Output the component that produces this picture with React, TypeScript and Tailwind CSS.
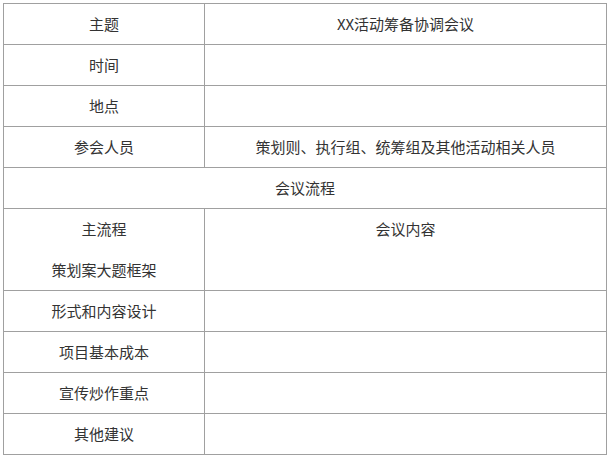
const rows: [string, string][] = [
  ["主题", "XX活动筹备协调会议"],
  ["时间", ""],
  ["地点", ""],
  ["参会人员", "策划则、执行组、统筹组及其他活动相关人员"],
]

const tail = ["形式和内容设计", "项目基本成本", "宣传炒作重点", "其他建议"]

function Cell({ children, className = "" }: { children?: React.ReactNode; className?: string }) {
  return (
    <div className={`flex h-[41px] items-center justify-center border-r border-b border-[#a0a0a0] ${className}`}>
      {children}
    </div>
  )
}

export default function App() {
  return (
    <div className="h-[458px] w-[611px] bg-white pt-[3px] pl-[3px]">
      <div
        className="grid w-[604px] grid-cols-[201px_402px] border-t border-l border-[#a0a0a0] text-[15px] text-[#333]"
        style={{ fontFamily: '"Noto Sans CJK SC", "Noto Sans", sans-serif' }}
      >
        {rows.map(([k, v]) => (
          <div key={k} className="contents">
            <Cell>{k}</Cell>
            <Cell>{v}</Cell>
          </div>
        ))}
        <Cell className="col-span-2">会议流程</Cell>

        <div className="flex h-[82px] flex-col border-r border-b border-[#a0a0a0]">
          <div className="flex h-[41px] items-center justify-center">主流程</div>
          <div className="flex h-[40px] items-center justify-center">策划案大题框架</div>
        </div>
        <div className="flex h-[82px] flex-col border-r border-b border-[#a0a0a0]">
          <div className="flex h-[41px] items-center justify-center">会议内容</div>
        </div>

        {tail.map((k) => (
          <div key={k} className="contents">
            <Cell>{k}</Cell>
            <Cell />
          </div>
        ))}
      </div>
    </div>
  )
}
